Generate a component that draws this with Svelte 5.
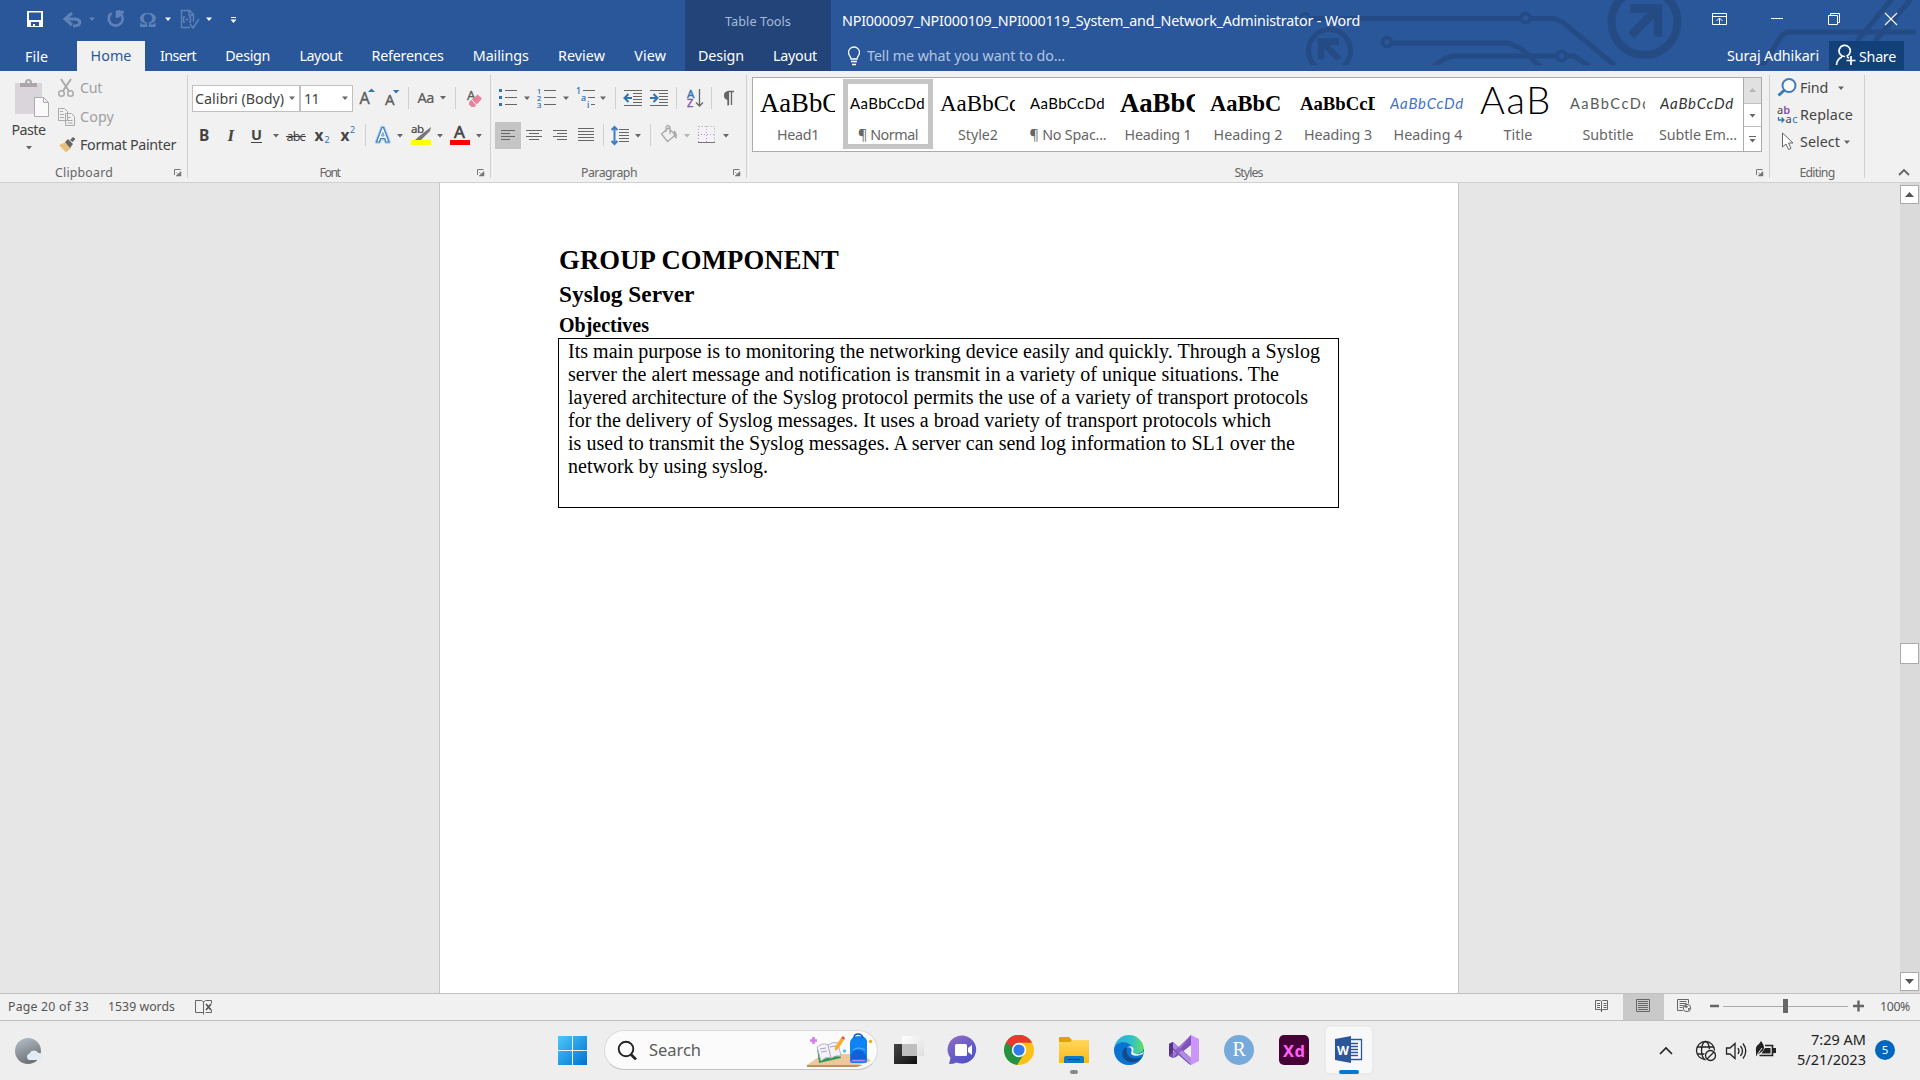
<script>
  // Sets letter-spacing so that a label takes the given width in pixels.
  function fit(node, width) {
    const n = node.textContent.length;
    const natural = node.getBoundingClientRect().width;
    node.style.letterSpacing = (width - natural) / n + 'px';
  }

  const UI = 'font-family="Noto Sans, sans-serif"';
  const caret = (x, y, c = '#666') => `<path d="M${x - 3} ${y - 1.5}h6l-3 3.5z" fill="${c}"/>`;
  const rows = (x, y, widths, step, c = '#666') =>
    `<path d="${widths.map((w, i) => `M${x + (Array.isArray(w) ? w[0] : 0)} ${y + i * step}h${Array.isArray(w) ? w[1] : w}`).join('')}" stroke="${c}"/>`;
  const sep = (x, y1, y2) => `<path d="M${x}.5 ${y1}V${y2}" stroke="#d0d0d0"/>`;

  // Icons are [x, width, markup] cells laid side by side, each drawn in window coordinates.
  const quick = [
    [20, 36, `<path d="M27.5 11.5h15v15h-15z" fill="none" stroke="#fff"/><path d="M27 11h16v16H27zM29 12.500v7.500h12v-7.500zM31 22v4h2v-2h2v2h4v-4z" fill="#fff" fill-rule="evenodd"/>`],
    [56, 44, `<path d="M72 13l-7 6 7 6M65 19h9c8 0 8 7-1 7" fill="none" stroke="#5f82b8" stroke-width="3"/>${caret(92, 19, '#5f82b8')}`],
    [100, 30, `<path d="M111.500 13a7 7 0 1 0 9 .5M119 10v7M124 12h-7v6" fill="none" stroke="#5f82b8" stroke-width="2.600"/>`],
    [130, 46, `<text x="139" y="26.500" font-size="22" font-weight="700" font-family="Liberation Serif" fill="#5f82b8">Ω</text>${caret(168, 19, '#fff')}`],
    [176, 44, `<path d="M190 27.500h-8.500v-17h8l4 4v7M189 10.500v4.500h5M185 17h-1.500v5h1.500M189 17h1.500v5h-1.500M185.500 19.500h3M190 24l3 4 6-9" fill="none" stroke="#5f82b8" stroke-width="1.400"/>${caret(209, 19, '#fff')}`],
    [220, 30, `<path d="M231 17.500h5" stroke="#fff"/>${caret(233.500, 21, '#fff')}`],
  ];
  const windowButtons = [
    [1690, 56, `<path d="M1712.500 13.500h14v11h-14zM1712.500 16.500h14M1719.500 24v-6M1716.500 21l3-3 3 3" stroke="#fff" fill="none"/>`],
    [1746, 56, `<path d="M1771 18.500h12" stroke="#fff"/>`],
    [1802, 60, `<path d="M1828.500 15.500h9v9h-9zM1830.500 15v-1.500h9v9h-1.500" stroke="#fff" fill="none"/>`],
    [1862, 58, `<path d="M1885 13l12 12M1897 13l-12 12" stroke="#fff" stroke-width="1.100"/>`],
  ];
  const tabs = [['Insert', 36], ['Design', 45], ['Layout', 43], ['References', 72], ['Mailings', 56], ['Review', 47], ['View', 32]];

  const fontTop = [
    [353, 27, `<text x="359.500" y="104" font-size="16" fill="#595959" stroke="#595959" stroke-width=".3" ${UI}>A</text><path d="M368 92l3.500-3.500 3.500 3.500z" fill="#2e75b6"/>`],
    [380, 24, `<text x="385" y="105" font-size="15" fill="#595959" stroke="#595959" stroke-width=".3" ${UI}>A</text><path d="M393 90l3 3.500 3.500-3.500z" fill="#2e75b6"/>`],
    [404, 48, `${sep(408, 87, 109)}<text x="417.500" y="103" font-size="14.500" fill="#595959" stroke="#595959" stroke-width=".2" textLength="17" ${UI}>Aa</text>${caret(443, 97.500)}`],
    [452, 36, `${sep(455, 87, 109)}<text x="467" y="100" font-size="13" fill="#595959" stroke="#595959" stroke-width=".3" ${UI}>A</text><path d="M469 102l8.500-7.500 4.500 4-7.500 8.500h-3l-2.500-2.500z" fill="#e8829b"/><path d="M472 100l4.500 5" stroke="#fff"/>`],
  ];
  const fontBottom = [
    [192, 27, `<text x="199" y="141" font-size="15.500" font-weight="700" fill="#444" ${UI}>B</text>`],
    [219, 26, `<text x="227.500" y="141" font-size="17" font-weight="700" font-style="italic" fill="#444" font-family="Liberation Serif">I</text>`],
    [245, 38, `<text x="251" y="140" font-size="14.500" font-weight="700" fill="#444" ${UI}>U</text><path d="M251 142.500h11" stroke="#444"/>${caret(276, 135.500)}`],
    [283, 26, `<text x="286.500" y="140.500" font-size="12.500" fill="#444" textLength="19" ${UI}>abc</text><path d="M286 136.500h20" stroke="#444"/>`],
    [309, 26, `<text x="314.500" y="141" font-size="15.500" font-weight="700" fill="#444" ${UI}>x</text><text x="324.500" y="143" font-size="9" fill="#2e75b6" ${UI}>2</text>`],
    [335, 26, `<text x="340.500" y="141" font-size="15.500" font-weight="700" fill="#444" ${UI}>x</text><text x="350" y="133" font-size="9" fill="#2e75b6" ${UI}>2</text>`],
    [361, 46, `${sep(365, 124, 146)}<g fill="none" stroke-linejoin="round"><path d="M376.500 142l5.500-14.500h1.500l5.500 14.500h-3l-1.300-3.500h-4l-1.300 3.500z" stroke="#a9cdee" stroke-width="3.500"/><path d="M376.500 142l5.500-14.500h1.500l5.500 14.500h-3l-1.300-3.500h-4l-1.300 3.500z" fill="#f8fbff" stroke="#3c7fc0" stroke-width="1.200"/><path d="M381.500 136l1.300-3.500 1.300 3.500z" stroke="#3c7fc0" stroke-width=".8"/></g>${caret(400, 135.500)}`],
    [407, 39, `<text x="411" y="133" font-size="11.500" fill="#444" stroke="#444" stroke-width=".2" textLength="13" ${UI}>ab</text><path d="M431 127l-11 8.500-5 4.500h6l3-3 6-6z" fill="#777"/><path d="M411 140h20v5h-20z" fill="#ff0"/>${caret(440, 135.500)}`],
    [446, 42, `<text x="454" y="138" font-size="17" fill="#444" stroke="#444" stroke-width=".6" ${UI}>A</text><path d="M450 140h20v5h-20z" fill="#f00"/>${caret(479, 135.500)}`],
  ];
  const paraTop = [
    [495, 38, `<path d="M499 89h3v3h-3zM499 96h3v3h-3zM499 103h3v3h-3z" fill="#2e75b6"/>${rows(505, 90.500, [12, 12, 12], 7)}${caret(527, 98)}`],
    [533, 40, `<g font-size="7.500" fill="#2e75b6" stroke="#2e75b6" stroke-width=".2" ${UI}><text x="537" y="93.500">1</text><text x="537" y="100.500">2</text><text x="537" y="107.500">3</text></g>${rows(544, 90.500, [12, 12, 12], 7)}${caret(566, 98)}`],
    [573, 38, `<g font-size="9" fill="#2e75b6" stroke="#2e75b6" stroke-width=".2" ${UI}><text x="576" y="94">1</text><text x="581" y="101">a</text><text x="587" y="107.500">i</text></g>${rows(583, 90.500, [12, [5, 7], [8, 4]], 7)}${caret(603, 98)}`],
    [611, 34, `${sep(615, 87, 109)}${rows(624, 90.500, [18, [9, 9], [9, 9], [9, 9], [9, 9], 18], 3)}<path d="M632 98h-7M628.500 94l-4 4 4 4" stroke="#2e75b6" stroke-width="2" fill="none"/>`],
    [645, 30, `${rows(650, 90.500, [18, [9, 9], [9, 9], [9, 9], [9, 9], 18], 3)}<path d="M650 98h7M653.500 94l4 4-4 4" stroke="#2e75b6" stroke-width="2" fill="none"/>`],
    [675, 34, `${sep(676, 87, 109)}<text x="687" y="97.500" font-size="11.500" fill="#2e75b6" stroke="#2e75b6" stroke-width=".4" ${UI}>A</text><text x="687" y="107" font-size="11" fill="#8a4fa8" stroke="#8a4fa8" stroke-width=".4" ${UI}>Z</text><path d="M699.500 89v17M696 102.500l3.500 3.500 3.500-3.500" fill="none" stroke="#666" stroke-width="1.300"/>`],
    [709, 34, `${sep(711, 87, 109)}<path d="M734 91.500h-6a4.200 4.200 0 0 0 0 8v6M728.500 91v14M731.500 91v14" fill="none" stroke="#666" stroke-width="1.300"/><path d="M729 91.500h-1a4 4 0 0 0 0 8h1z" fill="#666"/>`],
  ];
  const paraBottom = [
    [495, 26, `<path d="M495 122h26v27h-26z" fill="#c5c5c5"/>${rows(501, 130.500, [14, 9, 14, 9], 3)}`],
    [521, 26, rows(526, 130.500, [16, [3, 10], 16, [3, 10]], 3)],
    [547, 26, rows(552, 130.500, [[1, 14], [5, 10], [1, 14], [5, 10]], 3)],
    [573, 26, rows(578, 128.500, [16, 16, 16, 16, 16], 3)],
    [599, 48, `${sep(603, 124, 146)}<path d="M614.500 127v16M611.500 130l3-3 3 3M611.500 141l3 3 3-3" fill="none" stroke="#3f7cc4" stroke-width="2"/>${rows(619, 129.500, [10, 10, 10, 10, 10], 3)}${caret(638, 135.500)}`],
    [647, 44, `${sep(650, 124, 146)}<path d="M661.500 134l7-6 7 7-8 6.500zM666 132v-5q2-3 4 0v7" fill="none" stroke="#aaa" stroke-width="1.300"/><path d="M674 130q4 3 2.500 9l-3-3z" fill="#aaa"/>${caret(687, 135.500, '#b5b5b5')}`],
    [691, 52, `<path d="M698 126h17v16h-17z" fill="#f6f1f8"/><path d="M698.500 126.500h16v15M698.500 126v16M706.500 126v16M698 134.500h17" fill="none" stroke="#aaa" stroke-dasharray="1 2"/><path d="M698 142.500h17" stroke="#777"/>${caret(726, 135.500)}`],
  ];
  const launcher = (x) => `<path d="M${x}.5 175v-5.500h6" fill="none" stroke="#777"/><path d="M${x + 2} 172l3 3M${x + 7} 171.500v4.500h-5z" stroke="#777" fill="#777" stroke-width=".5"/>`;

  const styles = [
    ['Head1', 42, 'serif s26', 'AaBbCc'], ['¶ Normal', 60, 'lato', 'AaBbCcDd', 75], ['Style2', 40, 'serif s23', 'AaBbCc'],
    ['¶ No Spac...', 77, 'lato', 'AaBbCcDd', 75], ['Heading 1', 67, 'serif s26 b', 'AaBbC'], ['Heading 2', 69, 'serif s22 b', 'AaBbC'],
    ['Heading 3', 68, 'serif s19 b', 'AaBbCcD'], ['Heading 4', 69, 'lato it blue', 'AaBbCcDd', 74], ['Title', 29, 'lato title', 'AaB', 72],
    ['Subtitle', 51, 'lato sub', 'AaBbCcDd', 82], ['Subtle Em...', 78, 'lato it', 'AaBbCcDd', 74],
  ];
  const lines = [
    ['Its main purpose is to monitoring the networking device easily and quickly. Through a Syslog', 752],
    ['server the alert message and notification is transmit in a variety of unique situations. The', 711],
    ['layered architecture of the Syslog protocol permits the use of a variety of transport protocols', 740],
    ['for the delivery of Syslog messages. It uses a broad variety of transport protocols which', 703],
    ['is used to transmit the Syslog messages. A server can send log information to SL1 over the', 727],
    ['network by using syslog.', 200],
  ];

  const statusIcons = [
    [1582, 41, `<path d="M1595.500 1000.500h5l1 1 1-1h5v9h-5l-1 1.500-1-1.500h-5zM1601.500 1001v11M1597 1003.500h3M1597 1005.500h3M1597 1007.500h3M1603.500 1003.500h3M1603.500 1005.500h3M1603.500 1007.500h3" fill="none" stroke="#666"/>`],
    [1623, 41, `<path d="M1623 994h41v26h-41z" fill="#c9c9c9"/><path d="M1636.500 999.500h13v12h-13zM1638 1001.500h10M1638 1003.500h10M1638 1005.500h10M1638 1007.500h10M1638 1009.500h10" fill="none" stroke="#666"/>`],
    [1664, 41, `<path d="M1683 1010.500h-5.500v-11h11v4M1679.500 1001.500h7M1679.500 1003.500h7M1679.500 1005.500h4M1679.500 1007.500h3" fill="none" stroke="#666"/><circle cx="1687" cy="1008" r="3.700" fill="#f1f1f1" stroke="#666"/><path d="M1685 1005l3 1-1 2-3-1zM1688 1008l2 0-2 3z" fill="#666"/>`],
    [1705, 165, `<path d="M1710 1006h9M1853 1006h11M1858.500 1000.500v11" stroke="#666" stroke-width="2.400"/><path d="M1723 1006.500h125" stroke="#aaa"/><path d="M1783 999h5v14h-5z" fill="#666"/>`],
  ];
  const apps = [
    [882, 54, `<path d="M894 1044h23v20h-23z" fill="url(#dark)"/><path d="M902 1036h22v20h-22z" fill="url(#pane)"/><path d="M902 1044h15v12h-15z" fill="#aaa" opacity=".7"/>`],
    [936, 55, `<path d="M949 1064l1.500-6a14.300 14 0 1 1 6 4.500q-3 1.500-7.500 1.500z" fill="url(#chat)"/><rect x="955" y="1044" width="12" height="12" rx="1.500" fill="#fff"/><path d="M968 1048l4-3v10l-4-3z" fill="#fff"/>`],
    [991, 55, `<circle cx="1019" cy="1050" r="15" fill="#fbc116"/><path d="M1019 1050L1006 1042.500a15 15 0 0 0 11 22.400l7-11z" fill="#229342"/><path d="M1006 1042.500a15 15 0 0 1 26 0h-13l-6.500 11z" fill="#e33b2e"/><path d="M1006 1042.500l6.500 11 1-5 5-6z" fill="#229342"/><path d="M1006 1042.500a15 15 0 0 1 26 0h-13a7.500 7.500 0 0 0-6.800 4.500z" fill="#e33b2e"/><circle cx="1019" cy="1050" r="7.200" fill="#fff"/><circle cx="1019" cy="1050" r="5.600" fill="#2f7bec"/>`],
    [1046, 55, `<path d="M1059 1038q0-1 1-1h9l3 3h16q1 0 1 1v22h-30z" fill="#e0a200"/><path d="M1059 1042h11l2-2h17v23h-30z" fill="url(#folder)"/><path d="M1064 1063v-5q0-2 2-2h16q2 0 2 2v5z" fill="#0f78c8"/><path d="M1068 1059.500h12" stroke="#064b86"/><rect x="1070" y="1070" width="8" height="4" rx="2" fill="#888"/>`],
    [1101, 55, `<circle cx="1129" cy="1050" r="15" fill="url(#edge)"/><path d="M1114 1049c2-8 14-9 18-2 2 3 1 5-1 7 5 3 12-3 12-3 0-3 1-1 1-1 0 9-7 15-15 15s-15-6-15-16z" fill="#0b74d1"/><path d="M1126 1047c-5 3-6 12 3 15 5 1 9 0 13-5-8 3-14 1-15-4q-1-4 0-5z" fill="#114a8b"/><path d="M1127 1048c3-2 6 1 4 5 0 3 6 4 12 1l1-3c-3 4-9 4-11 1 2-4-2-8-6-4z" fill="#eee"/>`],
    [1156, 55, `<path d="M1169 1044l4-2 18 16v7l-2-1-16-14-4 5z" fill="#6b3fa0"/><path d="M1169 1044l4-2v16l-4-2z" fill="#54348a"/><path d="M1173 1058l18-23v10l-15 12z" fill="#7a50b0"/><path d="M1173 1042l18 16v7l-18-17z" fill="#b18ae4"/><path d="M1191 1035l8 4v22l-8 4z" fill="#cb95fb"/><path d="M1169 1056l4 2 18-15v-8z" fill="#8455c0" opacity=".75"/>`],
    [1211, 55, `<circle cx="1239" cy="1050" r="15" fill="#75aadb"/><text x="1232.500" y="1056" font-size="20" fill="#fff" font-family="Liberation Serif">R</text>`],
    [1266, 56, `<rect x="1279" y="1035" width="30" height="30" rx="5" fill="#470137"/><text x="1283" y="1056.500" font-size="16.500" font-weight="700" fill="#ff61f6" textLength="22" ${UI}>Xd</text>`],
    [1322, 56, `<rect x="1325" y="1026" width="48" height="48" rx="5" fill="#f8f8f8" stroke="#e2e2e2"/><path d="M1350 1039.500h11.500v20H1350" fill="#fff" stroke="#2b579a" stroke-width="1.300"/><path d="M1351 1043.500h7M1351 1046.500h7M1351 1049.500h7M1351 1052.500h7M1351 1055.500h7" stroke="#2b579a" stroke-width="1.400"/><path d="M1335 1039l16-3v27l-16-3z" fill="#2b579a"/><text x="1337" y="1055" font-size="13" font-weight="700" fill="#fff" textLength="12" lengthAdjust="spacingAndGlyphs" ${UI}>W</text><rect x="1339" y="1070" width="20" height="4" rx="2" fill="#0078d4"/>`],
  ];
  const tray = [
    [1650, 36, `<path d="M1660 1053l6-6 6 6" fill="none" stroke="#222" stroke-width="1.600"/>`],
    [1686, 36, `<g fill="none" stroke="#222" stroke-width="1.300"><circle cx="1705.500" cy="1049.500" r="9"/><ellipse cx="1705.500" cy="1049.500" rx="4" ry="9"/><path d="M1697 1046h17M1697 1053h10"/></g><circle cx="1710.500" cy="1054.500" r="6.500" fill="#eee"/><circle cx="1710.500" cy="1054.500" r="5" fill="none" stroke="#222" stroke-width="1.300"/><path d="M1707 1058l7-7" stroke="#222" stroke-width="1.300"/>`],
    [1722, 30, `<path d="M1726.500 1047v6h3.500l5 4.500v-15l-5 4.500zM1738 1047q2 3 0 6M1740.500 1045q4 5 0 10M1743 1042.500q5.500 7.500 0 15" fill="none" stroke="#222" stroke-width="1.300"/>`],
    [1752, 30, `<path d="M1765 1044.500h7.500v10h-13" fill="none" stroke="#222" stroke-width="1.600"/><path d="M1765 1047h5.500v5.500h-9zM1773 1047h3v5h-3z" fill="#222"/><path d="M1756 1051q-1-6 3-8l2-3 2 3q3 6-3 9l-4 3z" fill="#222"/><path d="M1757 1054l5-7" stroke="#eee"/>`],
  ];
</script>

{#snippet cells(list, y, h)}
  {#each list as [x, w, body]}
    <svg width={w} height={h} viewBox="{x} {y} {w} {h}">{@html body}</svg>
  {/each}
{/snippet}

<svg class="defs" width="0" height="0" aria-hidden="true">
  <linearGradient id="dark" x2="1" y2="1"><stop stop-color="#444" /><stop offset="1" stop-color="#111" /></linearGradient>
  <linearGradient id="pane" x2="1" y2="1"><stop stop-color="#fff" /><stop offset="1" stop-color="#dedede" /></linearGradient>
  <linearGradient id="chat" x2=".7" y2="1"><stop stop-color="#8e6fc4" /><stop offset="1" stop-color="#4f50c8" /></linearGradient>
  <linearGradient id="folder" x2="0" y2="1"><stop stop-color="#ffd75e" /><stop offset="1" stop-color="#fbb914" /></linearGradient>
  <linearGradient id="edge"><stop stop-color="#28a8e8" /><stop offset=".6" stop-color="#2fc3c8" /><stop offset="1" stop-color="#68e05c" /></linearGradient>
  <linearGradient id="win" x2="1" y2="1"><stop stop-color="#4cc9fb" /><stop offset="1" stop-color="#0070d0" /></linearGradient>
  <linearGradient id="moon" x2=".4" y2="1"><stop stop-color="#b8c0cb" /><stop offset="1" stop-color="#6e7479" /></linearGradient>
</svg>

<div class="window">
  <header>
    <svg class="art" width="640" height="65" viewBox="1280 0 640 65" fill="none" stroke="#244b84" stroke-width="5">
      <circle cx="1305" cy="17.500" r="4" stroke-width="3" /><path d="M1309 18.500h212M1530 18.500h24l9 4 52 43" />
      <circle cx="1525.500" cy="18" r="4.500" stroke-width="3.500" />
      <circle cx="1329.500" cy="50.500" r="21" /><path d="M1339 41.500h-18v18M1321 41l18 18" stroke-width="6.500" />
      <circle cx="1387" cy="42" r="4.500" stroke-width="3.500" /><path d="M1392 43h116l12 5 22 20" />
      <path d="M1434 66l12-8 7-2h104M1566 56h8l15 10" /><circle cx="1561.500" cy="56" r="4.500" stroke-width="3.500" />
      <circle cx="1644.500" cy="22" r="33" stroke-width="8" /><path d="M1630 8.500h28v28M1658 8.500l-27 27" stroke-width="8.500" />
      <path d="M1762 66l20-31 5-3h129M1857 41l35-42M1875 41l36-42" />
    </svg>
    <div class="titlebar">
      <div class="quick">{@render cells(quick, 0, 41)}</div>
      <div class="context"><span use:fit={66}>Table Tools</span></div>
      <div class="doc-title"><span use:fit={518}>NPI000097_NPI000109_NPI000119_System_and_Network_Administrator - Word</span></div>
      <div class="wbtns">{@render cells(windowButtons, 0, 41)}</div>
    </div>
    <nav>
      <div class="file"><span use:fit={23}>File</span></div>
      <div class="tab active"><span use:fit={41}>Home</span></div>
      <div class="tabs">
        {#each tabs as [name, w]}<span use:fit={w}>{name}</span>{/each}
      </div>
      <div class="ctx-tabs"><span use:fit={46}>Design</span><span use:fit={44}>Layout</span></div>
      <div class="tell">
        <svg width="12" height="20" viewBox="848 46 12 20"><path d="M851 59c0-3-2.500-3-2.500-6.500a5.500 5.500 0 0 1 11 0c0 3.500-2.500 3.500-2.500 6.500zM851 61.500h6M852 64.500h4" fill="none" stroke="#fff" stroke-width="1.300" /></svg>
        <span use:fit={198}>Tell me what you want to do...</span>
      </div>
      <div class="user"><span use:fit={92}>Suraj Adhikari</span></div>
      <div class="share">
        <svg width="21" height="22" viewBox="1835 44 21 22"><path d="M1845 56.500a5.600 5.600 0 1 1 1.500-.3M1842 57q-5 2-5.500 8M1847 57l2 1M1851 56v9M1846.500 60.500h9" fill="none" stroke="#fff" stroke-width="1.700" /></svg>
        <span use:fit={37}>Share</span>
      </div>
    </nav>
  </header>

  <section class="ribbon">
    <div class="group clipboard">
      <div class="controls">
        <div class="paste">
          <svg width="36" height="39" viewBox="14 79 36 39"><path d="M15 83h27v31H15z" fill="#d9d5da" /><path d="M20 83h5q0-4 3.500-4t3.500 4h5v4H20z" fill="#aaa6aa" /><circle cx="28.500" cy="82" r="1.300" fill="#eee" /><path d="M34.500 97.500h9l5 5v14h-14zM43.500 97.500v5h5" fill="#fafafa" stroke="#b0a8b2" /></svg>
          <span use:fit={34}>Paste</span>
          <svg width="10" height="6" viewBox="24 145 10 6">{@html caret(29, 147.500)}</svg>
        </div>
        <div class="clips">
          <div class="off">
            <svg width="18" height="20" viewBox="57 78 18 20"><path d="M61 79l8 12M71 79l-8 12" stroke="#aaa" stroke-width="2" /><circle cx="61.500" cy="93.500" r="2.800" fill="none" stroke="#aaa" stroke-width="1.500" /><circle cx="70.500" cy="93.500" r="2.800" fill="none" stroke="#aaa" stroke-width="1.500" /></svg>
            <span use:fit={22}>Cut</span>
          </div>
          <div class="off">
            <svg width="18" height="20" viewBox="57 106 18 20"><path d="M58.500 107.500h6l3 3v9h-9zM65.500 112.500h6l3 3v9h-9z" fill="#f1f1f1" stroke="#aaa" /><path d="M60 110.500h3M60 113.500h4M60 116.500h4M67.500 116.500h3M67.500 119.500h5M67.500 122h5" stroke="#aaa" /></svg>
            <span use:fit={34}>Copy</span>
          </div>
          <div>
            <svg width="18" height="20" viewBox="57 134 18 20"><path d="M59 144l7-3 5 6-5 4.500z" fill="#e9c07c" /><path d="M65 141l3-3 5 5-3 4zM70 139l3-3 2.500 2-3 3z" fill="#666" /></svg>
            <span use:fit={96}>Format Painter</span>
          </div>
        </div>
      </div>
      <footer><span class="cap" use:fit={58}>Clipboard</span><svg width="9" height="9" viewBox="173 168 9 9">{@html launcher(174)}</svg></footer>
    </div>

    <div class="group font">
      <div class="controls rows">
        <div class="line">
          <div class="combo family"><span use:fit={89}>Calibri (Body)</span><svg width="14" height="24" viewBox="285 86 14 24">{@html caret(292, 98)}</svg></div>
          <div class="combo size"><span use:fit={15}>11</span><svg width="14" height="24" viewBox="337 86 14 24">{@html caret(344, 98)}</svg></div>
          {@render cells(fontTop, 84, 28)}
        </div>
        <div class="line">{@render cells(fontBottom, 121, 28)}</div>
      </div>
      <footer><span class="cap" use:fit={25}>Font</span><svg width="9" height="9" viewBox="476 168 9 9">{@html launcher(477)}</svg></footer>
    </div>

    <div class="group para">
      <div class="controls rows">
        <div class="line">{@render cells(paraTop, 84, 28)}</div>
        <div class="line">{@render cells(paraBottom, 121, 28)}</div>
      </div>
      <footer><span class="cap" use:fit={61}>Paragraph</span><svg width="9" height="9" viewBox="732 168 9 9">{@html launcher(733)}</svg></footer>
    </div>

    <div class="group styles">
      <div class="controls">
        <div class="gallery">
          {#each styles as [name, w, cls, sample, sw], i}
            <div class="style" class:selected={i === 1}>
              <div class="sample {cls}">{#if sw}<span use:fit={sw}>{sample}</span>{:else}<span>{sample}</span>{/if}</div>
              <div class="name"><span use:fit={w}>{name}</span></div>
            </div>
          {/each}
          <div class="scroller">
            <svg class="dim" width="17" height="25" viewBox="1745 78 17 25"><path d="M1750 92h7l-3.500-4z" fill="#b5b5b5" /></svg>
            <svg width="17" height="22" viewBox="1745 104 17 22">{@html caret(1753.5, 115.5)}</svg>
            <svg width="17" height="24" viewBox="1745 127 17 24"><path d="M1750 136.500h7" stroke="#666" />{@html caret(1753.5, 140.5)}</svg>
          </div>
        </div>
      </div>
      <footer><span class="cap" use:fit={33}>Styles</span><svg width="9" height="9" viewBox="1755 168 9 9">{@html launcher(1756)}</svg></footer>
    </div>

    <div class="group editing">
      <div class="controls stack">
        <div>
          <svg width="22" height="22" viewBox="1777 77 22 22"><circle cx="1789" cy="85.500" r="6.500" fill="#fafafa" stroke="#3c7ab8" stroke-width="2" /><path d="M1784.500 90l-6 5.500" stroke="#3c7ab8" stroke-width="3" /></svg>
          <span use:fit={28}>Find</span>
          <svg class="gap" width="10" height="8" viewBox="1836 83 10 8">{@html caret(1841, 87)}</svg>
        </div>
        <div>
          <svg width="22" height="22" viewBox="1777 104 22 22"><g font-family="Noto Sans" font-size="11" fill="#444"><text x="1777" y="113.500">a<tspan fill="#8a4fa8" font-weight="600">b</tspan></text><text x="1785.500" y="123" textLength="12">a<tspan fill="#2e75b6">c</tspan></text></g><path d="M1778.500 117v3h5M1781.500 117.500l2.500 2.500-2.500 2.500" fill="none" stroke="#2e75b6" stroke-width="1.300" /></svg>
          <span use:fit={53}>Replace</span>
        </div>
        <div>
          <svg width="22" height="22" viewBox="1777 131 22 22"><path d="M1782.500 133v14l3.500-3 2.500 5.500 2.500-1-2.500-5.500h4.500z" fill="#fff" stroke="#666" /></svg>
          <span use:fit={40}>Select</span>
          <svg width="10" height="8" viewBox="1841 137 10 8">{@html caret(1847, 141)}</svg>
        </div>
      </div>
      <footer><span class="cap" use:fit={40}>Editing</span></footer>
    </div>
    <svg class="collapse" width="14" height="10" viewBox="1896 167 14 10"><path d="M1898 175l5-5 5 5" fill="none" stroke="#666" stroke-width="1.800" /></svg>
  </section>

  <main>
    <article>
      <h1><span use:fit={280}>GROUP COMPONENT</span></h1>
      <h2>Syslog Server</h2>
      <h3>Objectives</h3>
      <div class="cell">
        {#each lines as [text, w]}<p><span use:fit={w}>{text}</span></p>{/each}
      </div>
    </article>
    <div class="scrollbar">
      <svg class="btn" width="17" height="17" viewBox="0 0 17 17"><path d="M4 11h9L8.500 6z" fill="#555" /></svg>
      <div class="thumb"></div>
      <svg class="btn" width="17" height="17" viewBox="0 0 17 17"><path d="M4 6h9l-4.500 5z" fill="#555" /></svg>
    </div>
  </main>

  <div class="status">
    <span use:fit={81}>Page 20 of 33</span>
    <span class="words" use:fit={67}>1539 words</span>
    <svg width="18" height="16" viewBox="195 997 18 16"><path d="M203.500 999.500v13M203.500 1010.500h-8v-12h6l2 1.500 2-1.500h6v3M211.500 1008v2.500h-6" fill="none" stroke="#666" /><path d="M206 1002l5 6M211 1002l-5 6" stroke="#555" stroke-width="1.700" /></svg>
    <div class="views">{@render cells(statusIcons, 994, 26)}</div>
    <span class="pct" use:fit={30}>100%</span>
  </div>

  <div class="taskbar">
    <svg class="weather" width="30" height="28" viewBox="14 1036 30 28"><circle cx="28" cy="1050" r="13" fill="url(#moon)" /><path d="M29 1059a3.500 3.500 0 0 1 .5-6.500 5 5 0 0 1 9-.5 3.500 3.500 0 0 1 1 7z" fill="#e4ebf2" /></svg>
    <svg class="start" width="29" height="29" viewBox="0 0 29 29"><path d="M0 0h14v14H0zM15 0h14v14H15zM0 15h14v14H0zM15 15h14v14H15z" fill="url(#win)" /></svg>
    <div class="search">
      <svg width="20" height="20" viewBox="617 1040 20 20"><circle cx="626" cy="1049" r="7.300" fill="none" stroke="#222" stroke-width="1.900" /><path d="M631 1054.500l5 5" stroke="#222" stroke-width="2.600" /></svg>
      <span use:fit={52}>Search</span>
      <svg class="doodle" width="68" height="36" viewBox="804 1033 68 36">
        <path d="M806 1066l16-11h40l8 7-12 4z" fill="#eec79a" /><path d="M806 1066h56l-6 2h-50z" fill="#c08e60" />
        <path d="M816 1049l2 15 22-5-2-5z" fill="#2f9a4c" /><path d="M816 1048q6-5 11-2 5-4 10-2l3 13q-6-1-10 2-5-2-10 3z" fill="#f3f1fa" stroke="#b9b3cc" /><path d="M827 1046l3 13M819 1050l6-1M820 1053l6-1M829 1048l6-1" stroke="#a9a3c0" />
        <path d="M834 1048l6-9 3 2-6 9-3 2z" fill="#ffa928" /><path d="M840 1039l2-2 2 2-1 2z" fill="#e4524c" />
        <path d="M849 1045q0-8 9-8t8 8v17q0 2-2 2h-13q-2 0-2-2z" fill="#0f83f4" /><path d="M853 1039q0-4 4-4t5 4" fill="none" stroke="#0b55b8" stroke-width="1.500" /><path d="M850 1057q1-6 7-6t8 6v4h-15z" fill="#1060d8" /><path d="M852 1051q5-4 12 0" fill="none" stroke="#67b4ff" /><path d="M851 1061.500h13" stroke="#b98af5" stroke-width="1.500" />
        <path d="M812.500 1038v7M809 1041.500h7" stroke="#d47bf0" stroke-width="2.600" /><circle cx="843.500" cy="1052" r="1.700" fill="#4cc6ea" /><circle cx="869.500" cy="1042.500" r="1.700" fill="#f5a81c" />
      </svg>
    </div>
    <div class="apps">{@render cells(apps, 1022, 57)}</div>
    <div class="tray">{@render cells(tray, 1035, 30)}</div>
    <div class="clock"><span use:fit={55}>7:29 AM</span><span use:fit={69}>5/21/2023</span></div>
    <div class="badge">5</div>
  </div>
</div>

<style>
  :global(body) { margin: 0; overflow: hidden; }
  .window { width: 1920px; height: 1080px; display: flex; flex-direction: column; font-family: 'Noto Sans', 'Open Sans', sans-serif; font-size: 14.3px; color: #444; background: #f1f1f1; overflow: hidden; }
  .window * { box-sizing: border-box; }
  .defs { position: absolute; }
  svg { display: block; flex: none; }
  span { white-space: nowrap; display: inline-block; flex: none; }

  header { position: relative; height: 71px; background: #2a579a; color: #fff; flex: none; }
  .art { position: absolute; right: 0; top: 0; }
  .titlebar, nav { position: relative; display: flex; }
  .titlebar { height: 41px; line-height: 41px; }
  .quick { display: flex; width: 665px; padding-left: 20px; }
  .context { width: 146px; background: #224479; color: #a8bcda; font-size: 12.7px; text-align: center; margin-left: 20px; padding-top: 1px; }
  .doc-title { padding-left: 11px; flex: 1; }
  .wbtns { display: flex; }
  nav { height: 30px; line-height: 29px; }
  .file { width: 77px; padding: 1px 0 0 25px; }
  .tab.active { width: 68px; background: #f1f1f1; color: #2a579a; text-align: center; }
  .tabs { display: flex; gap: 29.2px; width: 540px; padding-left: 15px; }
  .ctx-tabs { width: 146px; background: #224479; display: flex; gap: 29px; padding-left: 13px; }
  .tell { display: flex; gap: 7px; padding: 0 0 0 17px; width: 896px; color: #b1c5e2; }
  .tell svg { margin-top: 5px; }
  .user { width: 102px; }
  .share { width: 75px; height: 29px; background: #124078; display: flex; gap: 3px; padding: 1px 0 0 6px; }
  .share svg { margin-top: 2px; }

  .ribbon { display: flex; height: 112px; border-bottom: 1px solid #d0d0d0; flex: none; position: relative; }
  .group { display: flex; flex-direction: column; position: relative; height: 111px; }
  .group::after { content: ''; position: absolute; right: 0; top: 4px; height: 103px; border-right: 1px solid #d0d0d0; }
  .controls { height: 91px; flex: none; }
  .group footer { display: flex; align-items: center; height: 20px; line-height: 18px; font-size: 12.3px; color: #666; padding-right: 6px; }
  .cap { margin: 1px auto 0; }
  .font .cap, .para .cap, .styles .cap { padding-right: 5px; }
  .editing .cap { padding-left: 5px; }
  .clipboard { width: 188px; }
  .clipboard .cap { margin-left: 55px; }
  .clipboard .controls { display: flex; }
  .paste { width: 57px; display: flex; flex-direction: column; align-items: center; padding: 8px 0 0; line-height: 23px; }
  .paste svg:first-child { margin-left: 6px; }
  .paste span + svg { margin-top: 4px; }
  .clips > div { display: flex; align-items: center; height: 28.5px; gap: 5px; line-height: 28px; }
  .clips { padding-top: 3px; }
  .off { color: #a0a0a0; }
  .font { width: 303px; }
  .para { width: 256px; }
  .rows { display: flex; flex-direction: column; gap: 9px; padding: 13px 0 0 4px; }
  .line { display: flex; height: 28px; }
  .combo { display: flex; justify-content: space-between; height: 27px; margin-top: 1px; border: 1px solid #c0c0c0; background: #fff; line-height: 25px; padding-left: 2px; overflow: hidden; }
  .family { width: 108px; }
  .size { width: 53px; padding-left: 3px; }
  .styles { width: 1023px; }
  .styles .controls { padding: 6px 0 0 5px; }
  .gallery { display: flex; width: 1010px; height: 75px; border: 1px solid #ababab; background: #fff; }
  .style { width: 90px; height: 70px; margin-top: 1px; padding: 8px 8px 0 7px; flex: none; color: #666; }
  .selected { box-shadow: inset 0 0 0 5px #c5c5c5; }
  .sample { height: 33px; overflow: hidden; line-height: 33px; color: #000; width: 75px; }
  .name { display: flex; justify-content: center; line-height: 29px; padding-left: 1px; }
  .serif { font-family: 'Liberation Serif', serif; }
  .s26 { font-size: 26.7px; }
  .s23 { font-size: 23px; }
  .s22 { font-size: 22.5px; }
  .s19 { font-size: 18.7px; }
  .b { font-weight: 700; }
  .lato { font-family: Lato, sans-serif; font-size: 15px; }
  .it { font-style: italic; color: #333; }
  .blue { color: #4472c4; }
  .title { font-size: 38px; font-weight: 300; line-height: 24px; }
  .sub { color: #5a5a5a; font-size: 14.6px; }
  .scroller { width: 18px; border-left: 1px solid #ababab; display: flex; flex-direction: column; margin-left: auto; }
  .scroller svg + svg { border-top: 1px solid #c0c0c0; box-sizing: content-box; }
  .dim { background: #e1e1e1; }
  .editing { width: 95px; }
  .stack { padding: 3px 0 0 7px; }
  .stack > div { display: flex; align-items: center; height: 27px; line-height: 26px; gap: 1px; }
  .gap { margin-left: 7px; }
  .collapse { margin: 96px 0 0 32px; }

  main { height: 810px; flex: none; display: flex; background: #e6e6e6; padding-left: 439px; justify-content: space-between; }
  article { width: 1020px; background: #fff; border: solid #c6c6c6; border-width: 0 1px; padding: 62px 0 0 119px; font-family: 'Liberation Serif', serif; color: #000; }
  h1, h2, h3, p { margin: 0; }
  h1 { font-size: 26.67px; line-height: 31px; height: 31px; }
  h2 { font-size: 23.33px; line-height: 27px; margin-top: 5px; }
  h3 { font-size: 20px; line-height: 23px; margin-top: 6px; }
  .cell { width: 781px; height: 170px; border: 1px solid #000; margin: 1px 0 0 -1px; padding: 1px 0 0 9px; font-size: 20px; line-height: 23px; }
  p { height: 23px; }
  .scrollbar { width: 20px; background: #dadada; display: flex; flex-direction: column; justify-content: space-between; padding: 2px 1px 2px 0; }
  .btn, .thumb { width: 19px; height: 19px; border: 1px solid #ababab; background: #fff; }
  .thumb { height: 21px; margin-top: 131px; }

  .status { height: 28px; flex: none; border: solid #c0c0c0; border-width: 1px 0; display: flex; align-items: center; padding-left: 8px; font-size: 12.3px; line-height: 24px; color: #555; }
  .words { margin: 0 20px 0 19px; }
  .views { display: flex; margin-left: auto; }
  .pct { margin: 0 10px 0 10px; }

  .taskbar { height: 59px; flex: none; background: #eee; display: flex; align-items: center; }
  .weather { margin-left: 14px; }
  .start { margin-left: 514px; }
  .search { width: 274px; height: 40px; margin: -2px 4px 0 17px; border: 1px solid #dadada; border-bottom-color: #c5c5c5; border-radius: 20px; background: #fbfbfb; display: flex; align-items: center; padding-left: 12px; font-size: 16.5px; color: #5c5c5c; overflow: hidden; }
  .search span { margin: 1px 0 0 12px; line-height: 38px; }
  .doodle { margin-left: auto; margin-right: 4px; }
  .apps { display: flex; }
  .tray { display: flex; margin-left: 272px; }
  .clock { width: 84px; display: flex; flex-direction: column; align-items: flex-end; line-height: 20px; padding-bottom: 4px; font-size: 14.5px; color: #222; }
  .badge { width: 20px; height: 20px; margin: -1px 0 0 9px; border-radius: 50%; background: #0067c0; color: #fff; font-size: 11.5px; line-height: 20px; text-align: center; }
</style>
